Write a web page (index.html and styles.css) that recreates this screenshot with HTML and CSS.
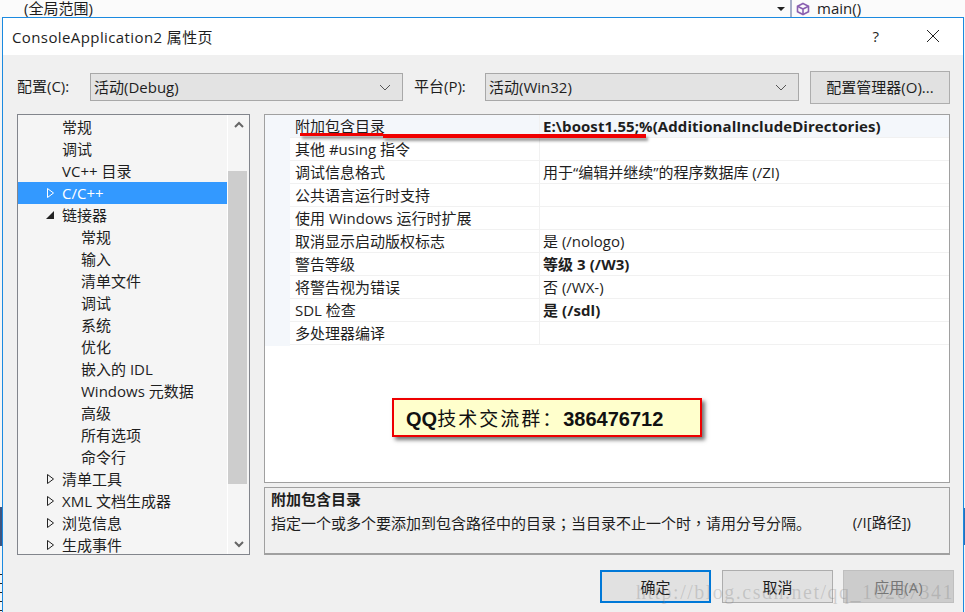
FILE: index.html
```html
<!DOCTYPE html>
<html lang="zh-CN">
<head>
    <meta charset="UTF-8">
    <title>ConsoleApplication2 属性页</title>
    <link rel="stylesheet" href="styles.css">
</head>
<body>
    <div class="editor-bar">
        <span class="scope">(全局范围)</span>
        <span class="scope-arrow"></span>
        <div class="member">
            <svg class="cube" width="14" height="14" viewBox="0 0 14 14" fill="none" stroke="#8a5fb0" stroke-width="1.6"><path d="M7 1.500 12.500 4.200v5.600L7 12.500 1.500 9.800V4.200z"/><path d="M1.500 4.200 7 7l5.500-2.800M7 7v5.500"/></svg>
            <span>main()</span>
        </div>
    </div>
    <div class="edge edge-left-dark"></div>
    <div class="edge edge-left-lines"></div>
    <div class="edge edge-right-dark"></div>
    <div class="dialog">
        <div class="title-bar">
            <span class="title">ConsoleApplication2 属性页</span>
            <span class="help">?</span>
            <svg class="close" width="14" height="14" viewBox="0 0 14 14" stroke="#222" stroke-width="1" fill="none"><path d="M1 1l12 12M13 1 1 13"/></svg>
        </div>
        <div class="body">
            <div class="config-row">
                <label class="config-label">配置(C):</label>
                <div class="combo combo-config"><span>活动(Debug)</span><svg width="12" height="7" viewBox="0 0 12 7" fill="none" stroke="#555"><path d="M1 1l5 5 5-5"/></svg></div>
                <label class="platform-label">平台(P):</label>
                <div class="combo combo-platform"><span>活动(Win32)</span><svg width="12" height="7" viewBox="0 0 12 7" fill="none" stroke="#555"><path d="M1 1l5 5 5-5"/></svg></div>
                <button class="manager">配置管理器(O)...</button>
            </div>
            <div class="main">
                <div class="tree">
                    <div class="tree-list">
                        <div class="node l1">常规</div>
                        <div class="node l1">调试</div>
                        <div class="node l1">VC++ 目录</div>
                        <div class="node l1 selected"><svg class="arrow" width="9" height="12" viewBox="0 0 9 12" fill="none" stroke="#fff"><path d="M1.500 1.500v9l6-4.500z"/></svg>C/C++</div>
                        <div class="node l1"><svg class="arrow" width="9" height="12" viewBox="0 0 9 12"><path d="M0 10h8V2z" fill="#222"/></svg>链接器</div>
                        <div class="node l2">常规</div>
                        <div class="node l2">输入</div>
                        <div class="node l2">清单文件</div>
                        <div class="node l2">调试</div>
                        <div class="node l2">系统</div>
                        <div class="node l2">优化</div>
                        <div class="node l2">嵌入的 IDL</div>
                        <div class="node l2">Windows 元数据</div>
                        <div class="node l2">高级</div>
                        <div class="node l2">所有选项</div>
                        <div class="node l2">命令行</div>
                        <div class="node l1"><svg class="arrow" width="9" height="12" viewBox="0 0 9 12" fill="none" stroke="#222"><path d="M1.500 1.500v9l6-4.500z"/></svg>清单工具</div>
                        <div class="node l1"><svg class="arrow" width="9" height="12" viewBox="0 0 9 12" fill="none" stroke="#222"><path d="M1.500 1.500v9l6-4.500z"/></svg>XML 文档生成器</div>
                        <div class="node l1"><svg class="arrow" width="9" height="12" viewBox="0 0 9 12" fill="none" stroke="#222"><path d="M1.500 1.500v9l6-4.500z"/></svg>浏览信息</div>
                        <div class="node l1"><svg class="arrow" width="9" height="12" viewBox="0 0 9 12" fill="none" stroke="#222"><path d="M1.500 1.500v9l6-4.500z"/></svg>生成事件</div>
                    </div>
                    <div class="scrollbar">
                        <svg width="10" height="7" viewBox="0 0 10 7" fill="none" stroke="#666" stroke-width="2"><path d="M1 6l4-4 4 4"/></svg>
                        <div class="track"><div class="thumb"></div></div>
                        <svg width="10" height="7" viewBox="0 0 10 7" fill="none" stroke="#666" stroke-width="2"><path d="M1 1l4 4 4-4"/></svg>
                    </div>
                </div>
                <div class="right">
                    <div class="props">
                        <div class="prop first"><div class="prop-name">附加包含目录</div><div class="prop-value strong">E:\boost1.55;%(AdditionalIncludeDirectories)</div></div>
                        <div class="prop"><div class="prop-name">其他 #using 指令</div><div class="prop-value"></div></div>
                        <div class="prop"><div class="prop-name">调试信息格式</div><div class="prop-value">用于“编辑并继续”的程序数据库 (/ZI)</div></div>
                        <div class="prop"><div class="prop-name">公共语言运行时支持</div><div class="prop-value"></div></div>
                        <div class="prop"><div class="prop-name">使用 Windows 运行时扩展</div><div class="prop-value"></div></div>
                        <div class="prop"><div class="prop-name">取消显示启动版权标志</div><div class="prop-value">是 (/nologo)</div></div>
                        <div class="prop"><div class="prop-name">警告等级</div><div class="prop-value strong">等级 3 (/W3)</div></div>
                        <div class="prop"><div class="prop-name">将警告视为错误</div><div class="prop-value">否 (/WX-)</div></div>
                        <div class="prop"><div class="prop-name">SDL 检查</div><div class="prop-value strong">是 (/sdl)</div></div>
                        <div class="prop"><div class="prop-name">多处理器编译</div><div class="prop-value"></div></div>
                        <div class="underline"></div>
                        <div class="underline underline-long"></div>
                        <div class="qq-note"><b>QQ</b><span class="qq-text">技术交流群：</span><b>386476712</b></div>
                    </div>
                    <div class="desc">
                        <div class="desc-title">附加包含目录</div>
                        <div class="desc-text"><span>指定一个或多个要添加到包含路径中的目录<span class="punct" lang="zh-TW">；</span>当目录不止一个时<span class="punct" lang="zh-TW">，</span>请用分号分隔。</span><span>(/I[路径])</span></div>
                    </div>
                </div>
            </div>
            <div class="buttons">
                <button class="btn btn-ok">确定</button>
                <button class="btn">取消</button>
                <button class="btn btn-disabled">应用(A)</button>
            </div>
        </div>
    </div>
    <div class="watermark">http://blog.csdn.net/qq_16267341</div>
</body>
</html>
```

FILE: styles.css
```css
* {
    box-sizing: border-box;
}
html, body {
    margin: 0;
    height: 612px;
    overflow: hidden;
}
body {
    position: relative;
    width: 965px;
    background-color: #f5f5f5;
    font-family: "Open Sans", "Noto Sans CJK SC", sans-serif;
    font-size: 15px;
    color: #1e1e1e;
}
.editor-bar {
    height: 17px;
    display: flex;
    align-items: center;
    background-color: #fbfbfb;
    line-height: 17px;
}
.scope {
    margin-left: 24px;
    flex: 1;
}
.scope-arrow {
    width: 0;
    height: 0;
    border-left: 4px solid transparent;
    border-right: 4px solid transparent;
    border-top: 4px solid #222;
    margin-right: 5px;
}
.member {
    width: 175px;
    height: 17px;
    display: flex;
    align-items: center;
    gap: 7px;
    padding-left: 4px;
    border-left: 2px solid #a6aec8;
}
.edge {
    position: absolute;
}
.edge-left-dark {
    left: 0;
    top: 507px;
    width: 2px;
    height: 39px;
    background-color: #3d5580;
}
.edge-left-lines {
    left: 0;
    top: 574px;
    width: 2px;
    height: 38px;
    background: repeating-linear-gradient(#222 0 1px, #f5f5f5 1px 9px);
}
.edge-right-dark {
    left: 964px;
    top: 508px;
    width: 1px;
    height: 37px;
    background-color: #2b6fb8;
}
.dialog {
    position: absolute;
    left: 2px;
    top: 17px;
    width: 962px;
    height: 595px;
    border: 1px solid #1b8ae0;
    border-bottom: none;
    background-color: #f0f0f0;
}
.title-bar {
    height: 37px;
    padding-bottom: 1px;
    background-color: #fff;
    display: flex;
    align-items: center;
    padding-left: 9px;
}
.title {
    flex: 1;
    letter-spacing: 0.4px;
}
.help {
    margin-right: 47px;
}
.close {
    margin-right: 23px;
}
.body {
    padding: 0 13px 0 14px;
}
.config-row {
    height: 59px;
    display: flex;
    align-items: flex-start;
    padding-top: 18px;
}
.config-label {
    width: 73px;
    line-height: 27px;
}
.platform-label {
    width: 71px;
    margin-left: 11px;
    line-height: 27px;
}
.combo {
    height: 28px;
    display: flex;
    align-items: center;
    justify-content: space-between;
    padding: 0 11px 2px 3px;
    background-color: #e3e3e3;
    border: 1px solid #a8a8a8;
}
.combo svg {
    margin-top: 2px;
}
.combo-config {
    width: 313px;
}
.combo-platform {
    width: 314px;
}
.manager {
    width: 140px;
    height: 33px;
    margin-left: 11px;
    margin-top: -2px;
    padding: 0 0 2px;
    background-color: #e1e1e1;
    border: 1px solid #adadad;
    font: inherit;
    color: inherit;
}
.main {
    display: flex;
    gap: 14px;
    height: 441px;
}
.tree {
    width: 233px;
    height: 441px;
    display: flex;
    border: 1px solid #82858c;
    background-color: #f5f5f5;
    overflow: hidden;
}
.tree-list {
    width: 209px;
    padding-top: 1px;
    flex-shrink: 0;
}
.node {
    height: 22px;
    line-height: 22px;
    white-space: nowrap;
    position: relative;
}
.l1 {
    padding-left: 44px;
}
.l2 {
    padding-left: 63px;
}
.selected {
    background-color: #3399ff;
    color: #fff;
}
.arrow {
    position: absolute;
    left: 28px;
    top: 5px;
}
.scrollbar {
    flex: 1;
    display: flex;
    flex-direction: column;
    align-items: center;
    padding: 6px 0;
    border-left: 1px solid #fff;
}
.track {
    flex: 1;
    width: 100%;
    margin: 6px 0;
}
.thumb {
    height: 313px;
    margin-top: 37px;
    width: 19px;
    background-color: #cdcdcd;
}
.right {
    flex: 1;
    display: flex;
    flex-direction: column;
    gap: 4px;
}
.props {
    position: relative;
    height: 369px;
    background-color: #fff;
    border: 1px solid #a0a0a0;
}
.prop {
    height: 23px;
    display: flex;
    margin-left: 25px;
    border-bottom: 1px solid #f1f1f1;
    line-height: 23px;
}
.prop.first {
    margin-left: 0;
    padding-left: 25px;
    background-color: #f4f7fb;
    line-height: 22px;
}
.props::before {
    content: "";
    position: absolute;
    left: 0;
    top: 0;
    width: 25px;
    height: 231px;
    background-color: #f4f7fb;
}
.prop-name {
    position: relative;
    width: 250px;
    padding-left: 5px;
    border-right: 1px solid #f1f1f1;
}
.prop-value {
    padding-left: 3px;
}
.strong {
    font-weight: 700;
    letter-spacing: 0.07px;
}
.underline {
    position: absolute;
    left: 35px;
    top: 18px;
    width: 83px;
    height: 3px;
    background-color: #f00000;
    box-shadow: 2px 3px 3px rgba(0, 0, 0, 0.4);
}
.underline-long {
    left: 118px;
    top: 19px;
    width: 263px;
    height: 4px;
}
.qq-note {
    position: absolute;
    left: 127px;
    top: 283px;
    width: 310px;
    height: 39px;
    border: 2px solid #ee0000;
    background-color: #ffffcc;
    box-shadow: 3px 3px 4px rgba(0, 0, 0, 0.55);
    padding-left: 12px;
    font-family: "Liberation Sans", sans-serif;
    font-size: 20px;
    line-height: 35px;
    color: #111;
    white-space: nowrap;
}
.qq-text {
    font-family: "Noto Sans CJK SC", sans-serif;
    font-size: 19px;
    letter-spacing: 2px;
}
.desc {
    height: 68px;
    padding: 0 6px;
    border: 1px solid #a0a0a0;
    border-bottom-width: 2px;
}
.desc-title {
    font-weight: 700;
    line-height: 23px;
}
.desc-text {
    display: flex;
    justify-content: space-between;
    padding-right: 32px;
    line-height: 23px;
}
.punct {
    font-family: "Noto Sans CJK TC", sans-serif;
}
.buttons {
    display: flex;
    justify-content: flex-end;
    margin-top: 15px;
    margin-right: -4px;
}
.btn {
    width: 111px;
    height: 33px;
    padding: 0;
    margin-left: 10px;
    background-color: #e1e1e1;
    border: 1px solid #adadad;
    font: inherit;
    color: inherit;
}
.btn-ok {
    margin-right: 1px;
    border: 2px solid #0078d7;
}
.btn-disabled {
    background-color: #cccccc;
    border-color: #bfbfbf;
    color: #777;
}
.watermark {
    position: absolute;
    left: 636px;
    top: 581px;
    font-family: "Liberation Serif", serif;
    font-size: 20px;
    letter-spacing: 1.500px;
    color: rgba(120, 120, 120, 0.28);
    white-space: nowrap;
}
```
